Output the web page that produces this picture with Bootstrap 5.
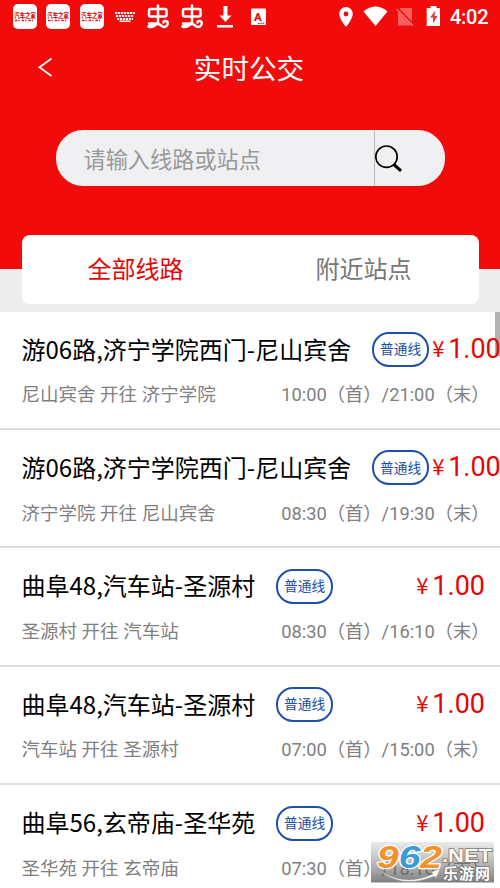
<!DOCTYPE html>
<html lang="zh-CN">
<head>
<meta charset="utf-8">
<meta name="viewport" content="width=device-width, initial-scale=1">
<title>实时公交</title>
<link href="https://cdn.jsdelivr.net/npm/bootstrap@5.3.0/dist/css/bootstrap.min.css" rel="stylesheet">
<style>
  html, body { height: 888px; overflow: hidden; }
  body { font-family: Roboto, "Noto Sans CJK SC", sans-serif; background: #fff; color: #000; }
  .screen { width: 500px; height: 888px; }
  .top-area { height: 311.6px; background: linear-gradient(#f20b0b 269px, #ededed 269px); }
  .status-bar { height: 34px; }
  .status-bar svg { display: block; }
  .title-bar { height: 70px; }
  .title-bar h1 { font-size: 27.6px; line-height: 40px; font-weight: 400; padding-right: 2px; }
  .search-box { width: 389px; height: 56px; margin: 26px 0 0 55.5px; border-radius: 27px; background: #f0f0f2; }
  .search-hint { width: 319px; padding: 5px 0 0 28px; font-size: 22.2px; color: #999; border-right: 1px solid #bcbcbe; }
  .tab-card { height: 69px; margin: 49px 21.5px 0; padding: 1px 1px 0 0; border-radius: 8px; font-size: 24px; color: #777; }
  .tab-on { color: #e60505; }
  .route { height: 118.4px; border-bottom: 2px solid #dfdfdf; padding: 18px 10.5px 0 21.5px; }
  .route-head { height: 40px; padding-right: 4.5px; white-space: nowrap; }
  .route-name { font-family: "Noto Sans CJK SC", sans-serif; font-size: 24px; line-height: 38px; padding-bottom: 2px; }
  .kind { width: 57px; height: 35px; margin-left: 21px; border: 2px solid #1f4fae; border-radius: 17px; color: #2350a5; font-size: 13.7px; }
  .fare { font-size: 27px; line-height: 43px; padding-left: 3px; color: #e60505; }
  .yen { font-size: 22px; font-family: "Noto Sans CJK SC", sans-serif; width: 16px; line-height: 39px; }
  .route-sub { font-size: 18.5px; line-height: 28px; margin-top: 11.6px; color: #808080; white-space: nowrap; }
  .hours { font-size: 18.3px; }
  .scroll-thumb { right: 0; top: 311.6px; width: 5.5px; height: 44px; background: #b3b3b3; z-index: -1; }
  .stamp { left: 371px; top: 842px; width: 124px; height: 41px; }
</style>
</head>
<body>
<div class="screen position-relative overflow-hidden z-0">
  <header class="top-area">
    <div class="status-bar text-white">
      <svg width="500" height="34" viewBox="0 0 500 34">
        <defs>
          <g id="app">
            <rect width="24" height="25" rx="5" fill="#fff"/>
            <text x="1.3" y="13.7" textLength="21.5" lengthAdjust="spacingAndGlyphs" font-size="6.4" font-weight="900" fill="#d71920" font-family="Noto Sans CJK SC, sans-serif">汽车之家</text>
            <path d="M2 16.5h20" stroke="#d71920" stroke-width="1.3" stroke-dasharray="2.5 1 1.2 2"/>
          </g>
          <g id="bug" fill="none" stroke="#fff" stroke-width="2.5" stroke-linecap="round" stroke-linejoin="round">
            <rect x="2" y="5" width="17.500" height="7.500" rx="1.5"/>
            <path d="M11 1.500V19.500M2 19.500H11Q4.500 19.500 1.500 22.500Q5 24 8.500 21Q11 18.500 14 21.500Q17.500 24.500 20 21.500Q22 18 19 17Q16.500 16.500 16.500 18.500"/>
          </g>
        </defs>
        <use href="#app" x="13" y="4"/><use href="#app" x="46" y="4"/><use href="#app" x="80" y="4"/>
        <path d="M115 13h20M116 16h18M117 19h16" stroke="#fff" stroke-width="2" stroke-dasharray="2.2 .8"/>
        <path d="M119.500 21.200h11" stroke="#fff" stroke-width="1.500"/>
        <use href="#bug" x="147" y="4"/><use href="#bug" x="181" y="4"/>
        <path d="M223.500 6h4v9.500h4L225.500 22l-6-6.500h4zM217 25h16v2.400h-16z" fill="#fff"/>
        <rect x="251" y="8.500" width="15" height="16.500" rx="1" fill="#fff"/>
        <text x="258" y="20.800" text-anchor="middle" font-size="11.500" font-weight="900" fill="#e31313" font-family="Roboto, sans-serif">A</text>
        <path d="M258 23.300h7" stroke="#e31313" stroke-width="1.200" stroke-dasharray="1.400 1"/>
        <path fill="#fff" fill-rule="evenodd" d="M346 7a6.800 6.800 0 0 0-6.800 6.800C339.200 19 346 27 346 27s6.800-8 6.800-13.200A6.800 6.800 0 0 0 346 7zm0 4.600a2.400 2.400 0 1 1 0 4.800a2.400 2.400 0 0 1 0-4.800z"/>
        <path fill="#fff" d="M363.500 11.500Q375.500 1.500 387.500 11.500L375.500 26z"/>
        <path fill="#f7605d" d="M400.500 8h11.500v17.500h-14V10.500z"/>
        <path d="M397 8.500l17 17" stroke="#f20b0b" stroke-width="3"/><path d="M396.500 9l16.500 16.500" stroke="#f7706d" stroke-width="1.500"/>
        <path fill="#fff" d="M430.500 6h6v2h3.500v18h-13.300V8h3.800z"/>
        <path fill="#dc3c3c" d="M435.500 10.500l-5.500 7h3v6l4.500-7.500h-3z"/>
        <text x="450" y="24" font-size="20" textLength="38.500" fill="#fff" font-family="Roboto, sans-serif" font-weight="500">4:02</text>
      </svg>
    </div>
    <div class="title-bar position-relative text-white text-center">
      <svg class="position-absolute top-0 start-0" width="70" height="70" viewBox="0 0 70 70"><path d="M51.500 24.500L39.500 33.200L51.500 42" fill="none" stroke="#fff" stroke-width="1.700"/></svg>
      <h1 class="mb-0 pt-3">实时公交</h1>
    </div>
    <div class="search-box d-flex">
      <div class="search-hint d-flex align-items-center">请输入线路或站点</div>
      <svg width="32" height="56" viewBox="0 0 32 56"><circle cx="11.500" cy="26.700" r="10.700" fill="none" stroke="#000" stroke-width="1.700"/><path d="M18.800 34.500l7.200 6.300" stroke="#000" stroke-width="3"/></svg>
    </div>
    <div class="tab-card bg-white d-flex text-center align-items-center">
      <div class="col tab-on">全部线路</div>
      <div class="col">附近站点</div>
    </div>
  </header>
  <div class="scroll-thumb position-absolute"></div>
  <main>
    <section class="route">
      <div class="route-head d-flex align-items-center"><span class="route-name">游06路,济宁学院西门-尼山宾舍</span><span class="kind d-flex flex-shrink-0 align-items-center justify-content-center">普通线</span><span class="fare d-flex flex-shrink-0 ms-auto"><span class="yen">¥</span>1.00</span></div>
      <div class="route-sub d-flex justify-content-between"><span>尼山宾舍 开往 济宁学院</span><span class="hours">10:00（首）/21:00（末）</span></div>
    </section>
    <section class="route">
      <div class="route-head d-flex align-items-center"><span class="route-name">游06路,济宁学院西门-尼山宾舍</span><span class="kind d-flex flex-shrink-0 align-items-center justify-content-center">普通线</span><span class="fare d-flex flex-shrink-0 ms-auto"><span class="yen">¥</span>1.00</span></div>
      <div class="route-sub d-flex justify-content-between"><span>济宁学院 开往 尼山宾舍</span><span class="hours">08:30（首）/19:30（末）</span></div>
    </section>
    <section class="route">
      <div class="route-head d-flex align-items-center"><span class="route-name">曲阜48,汽车站-圣源村</span><span class="kind d-flex flex-shrink-0 align-items-center justify-content-center">普通线</span><span class="fare d-flex flex-shrink-0 ms-auto"><span class="yen">¥</span>1.00</span></div>
      <div class="route-sub d-flex justify-content-between"><span>圣源村 开往 汽车站</span><span class="hours">08:30（首）/16:10（末）</span></div>
    </section>
    <section class="route">
      <div class="route-head d-flex align-items-center"><span class="route-name">曲阜48,汽车站-圣源村</span><span class="kind d-flex flex-shrink-0 align-items-center justify-content-center">普通线</span><span class="fare d-flex flex-shrink-0 ms-auto"><span class="yen">¥</span>1.00</span></div>
      <div class="route-sub d-flex justify-content-between"><span>汽车站 开往 圣源村</span><span class="hours">07:00（首）/15:00（末）</span></div>
    </section>
    <section class="route">
      <div class="route-head d-flex align-items-center"><span class="route-name">曲阜56,玄帝庙-圣华苑</span><span class="kind d-flex flex-shrink-0 align-items-center justify-content-center">普通线</span><span class="fare d-flex flex-shrink-0 ms-auto"><span class="yen">¥</span>1.00</span></div>
      <div class="route-sub d-flex justify-content-between"><span>圣华苑 开往 玄帝庙</span><span class="hours">07:30（首）/18:10（末）</span></div>
    </section>
  </main>
  <svg class="stamp position-absolute" viewBox="0 0 124 41">
    <defs><linearGradient id="shade" x2="0" y2="1"><stop stop-color="#777" stop-opacity=".15"/><stop offset="1" stop-color="#555" stop-opacity=".75"/></linearGradient></defs>
    <rect width="123" height="40.500" fill="url(#shade)"/>
    <text x="6" y="25.500" textLength="65" lengthAdjust="spacingAndGlyphs" font-family="Liberation Sans, sans-serif" font-weight="700" font-style="italic" font-size="31" stroke="#fff" stroke-width="2.400" paint-order="stroke" stroke-linejoin="round" fill="#f3922b">9<tspan fill="#3d9ad6">6</tspan>2</text>
    <path d="M7 27Q32 46 62 32l-2-2 9-3-4 9-1.500-2Q30 48 7 27z" fill="#fff" stroke="#999" stroke-width=".5"/>
    <g fill="#fff" stroke="#777" stroke-width="1.500" paint-order="stroke" font-weight="700">
      <text x="71" y="20" font-size="18" textLength="50" lengthAdjust="spacingAndGlyphs" font-family="Liberation Sans, sans-serif">.NET</text>
      <text x="72" y="36.500" font-size="15" textLength="47" font-family="Noto Sans CJK SC, sans-serif">乐游网</text>
    </g>
  </svg>
</div>
<script src="https://cdn.jsdelivr.net/npm/bootstrap@5.3.0/dist/js/bootstrap.bundle.min.js"></script>
</body>
</html>
